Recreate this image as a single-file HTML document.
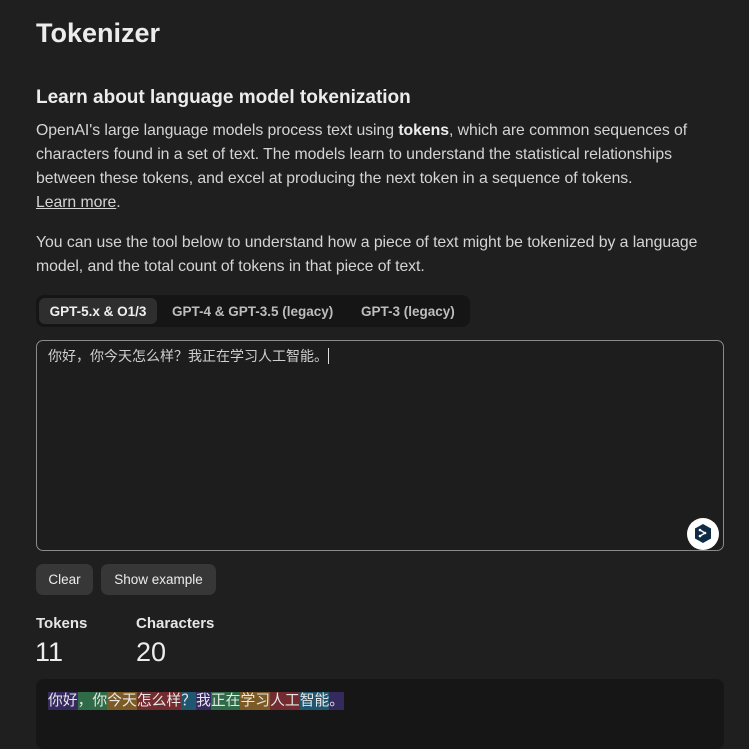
<!DOCTYPE html>
<html><head><meta charset="utf-8"><style>
*{margin:0;padding:0;box-sizing:border-box}
html,body{width:749px;height:738px}
body{background:#1f1f1f;color:#ececec;font-family:"Liberation Sans","Noto Sans CJK SC",sans-serif;position:relative;overflow:hidden}
.a{position:absolute;white-space:nowrap}
h1{position:absolute;left:36px;top:18px;font-size:27px;font-weight:600;color:#ececec}
h2{position:absolute;left:36px;top:87px;font-size:19px;font-weight:600;color:#ececec}
.p{font-size:15.8px;color:#d4d4d4;left:36px;letter-spacing:-0.05px}
.tabs{position:absolute;left:36px;top:295px;width:434px;height:32px;background:#151515;border-radius:8px}
.tab{position:absolute;top:3px;height:26px;line-height:28px;font-size:13.5px;color:#bdbdbd;font-weight:600}
.ta{position:absolute;left:36px;top:340px;width:688px;height:211px;border:1px solid #8a8a8a;border-radius:7px;background:#1d1d1d}
.btn{position:absolute;top:564px;height:31px;line-height:31px;background:#373737;border-radius:7px;font-size:13.5px;color:#ececec;text-align:center}
.out{position:absolute;left:36px;top:679px;width:688px;height:70px;background:#161616;border-radius:8px}
.tk{display:inline-block;height:18px;line-height:18px;font-size:14.8px;color:#e6e6e6}
</style></head><body>
<h1>Tokenizer</h1>
<h2>Learn about language model tokenization</h2>
<div class="a p" style="top:122px">OpenAI's large language models process text using <b style="color:#ececec">tokens</b>, which are common sequences of</div>
<div class="a p" style="top:146px">characters found in a set of text. The models learn to understand the statistical relationships</div>
<div class="a p" style="top:170px">between these tokens, and excel at producing the next token in a sequence of tokens.</div>
<div class="a p" style="top:194px"><u>Learn more</u>.</div>
<div class="a p" style="top:234px">You can use the tool below to understand how a piece of text might be tokenized by a language</div>
<div class="a p" style="top:258px">model, and the total count of tokens in that piece of text.</div>
<div class="tabs">
<div class="tab" style="left:3px;width:118px;background:#2e2e2e;border-radius:6px;color:#f0f0f0;text-align:center">GPT-5.x &amp; O1/3</div>
<div class="tab" style="left:136px">GPT-4 &amp; GPT-3.5 (legacy)</div>
<div class="tab" style="left:325px">GPT-3 (legacy)</div>
</div>
<div class="ta">
<div class="a" style="left:11px;top:5px;font-size:14px;color:#cfcfcf">你好，你今天怎么样？我正在学习人工智能。<span style="display:inline-block;width:1px;height:16px;background:#ddd;vertical-align:-3px;margin-left:0px"></span></div>
<svg class="a" style="left:649px;top:176px" width="34" height="34" viewBox="0 0 34 34"><circle cx="17" cy="17" r="16" fill="#fff"/><path d="M17 7l8 4.5v10l-8 4.5-8-4.5v-10z" fill="#0f2b46"/><path d="M14 13l5 3-5 3" stroke="#fff" stroke-width="1.4" fill="none"/><circle cx="14" cy="13" r="1.3" fill="#fff"/><circle cx="19" cy="16" r="1.3" fill="#fff"/><circle cx="14" cy="19" r="1.3" fill="#fff"/></svg>
</div>
<div class="btn" style="left:36px;width:57px">Clear</div>
<div class="btn" style="left:101px;width:115px">Show example</div>
<div class="a" style="left:36px;top:615px;font-size:15px;font-weight:600;color:#e6e6e6">Tokens</div>
<div class="a" style="left:136px;top:615px;font-size:15px;font-weight:600;color:#e6e6e6">Characters</div>
<div class="a" style="left:35px;top:637px;font-size:27px;color:#ececec">11</div>
<div class="a" style="left:136px;top:637px;font-size:27px;color:#ececec">20</div>
<div class="out">
<div class="a" style="left:12px;top:13px;font-size:0"><span class="tk" style="background:#352a5e">你好</span><span class="tk" style="background:#2f6b47">，你</span><span class="tk" style="background:#7c5a26">今天</span><span class="tk" style="background:#722b2e">怎么样</span><span class="tk" style="background:#1f5670">？</span><span class="tk" style="background:#352a5e">我</span><span class="tk" style="background:#2f6b47">正在</span><span class="tk" style="background:#7c5a26">学习</span><span class="tk" style="background:#722b2e">人工</span><span class="tk" style="background:#1f5670">智能</span><span class="tk" style="background:#352a5e">。</span></div>
</div>
</body></html>
